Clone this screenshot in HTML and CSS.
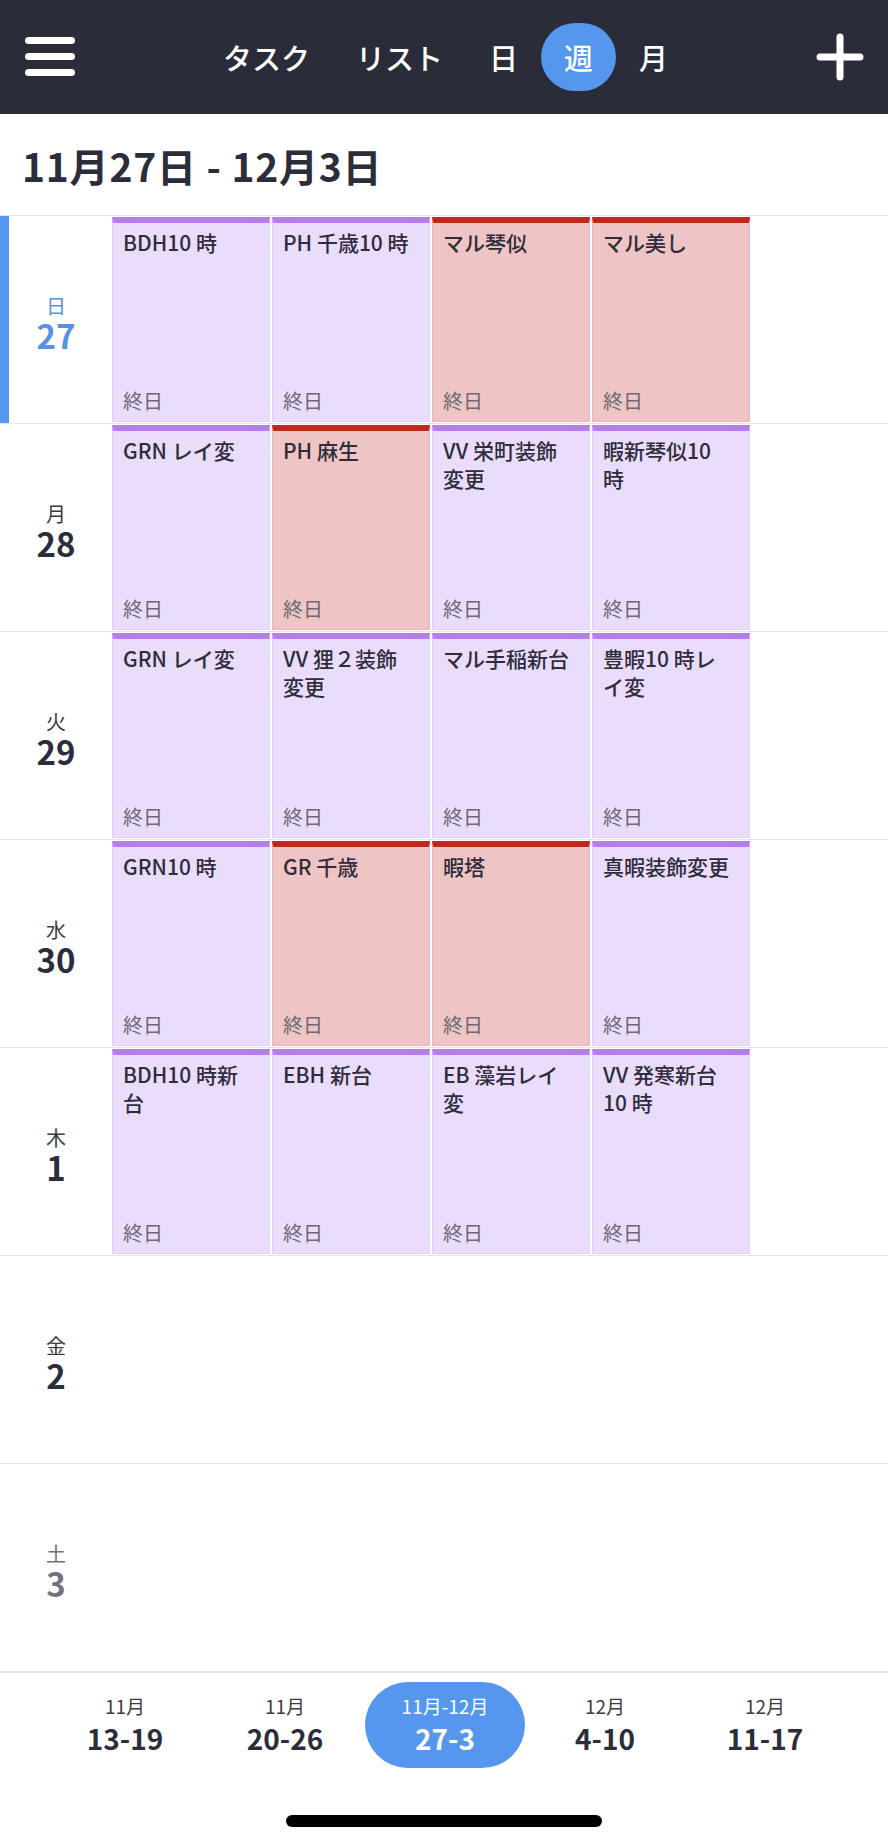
FILE: index.html
```html
<!DOCTYPE html>
<html lang="ja">
  <head>
    <meta charset="UTF-8" />
    <meta name="viewport" content="width=device-width, initial-scale=1.0" />
    <title>週表示</title>
    <link rel="stylesheet" href="styles.css">
  </head>
  <body>
    <div class="app">
      <header class="topbar">
        <button class="menu-button" aria-label="メニュー">
          <span></span><span></span><span></span>
        </button>
        <nav class="view-tabs">
          <a class="view-tab">タスク</a>
          <a class="view-tab">リスト</a>
          <a class="view-tab">日</a>
          <a class="view-tab active">週</a>
          <a class="view-tab">月</a>
        </nav>
        <button class="add-button" aria-label="追加">
          <svg width="48" height="48" viewBox="0 0 48 48">
            <path d="M24 4 V44 M4 24 H44" stroke="#fff" stroke-width="7" stroke-linecap="round" fill="none" />
          </svg>
        </button>
      </header>

      <section class="week-title">
        <h1>11月27日 - 12月3日</h1>
      </section>

      <main class="week">
        <div class="day-row">
          <div class="day-label today">
            <span class="weekday">日</span>
            <span class="date">27</span>
          </div>
          <div class="events">
            <div class="event purple"><div class="event-title">BDH10 時</div><div class="event-time">終日</div></div>
            <div class="event purple"><div class="event-title">PH 千歳10 時</div><div class="event-time">終日</div></div>
            <div class="event red"><div class="event-title">マル琴似</div><div class="event-time">終日</div></div>
            <div class="event red"><div class="event-title">マル美し</div><div class="event-time">終日</div></div>
          </div>
        </div>

        <div class="day-row">
          <div class="day-label">
            <span class="weekday">月</span>
            <span class="date">28</span>
          </div>
          <div class="events">
            <div class="event purple"><div class="event-title">GRN レイ変</div><div class="event-time">終日</div></div>
            <div class="event red"><div class="event-title">PH 麻生</div><div class="event-time">終日</div></div>
            <div class="event purple"><div class="event-title">VV 栄町装飾<br>変更</div><div class="event-time">終日</div></div>
            <div class="event purple"><div class="event-title">暇新琴似10<br>時</div><div class="event-time">終日</div></div>
          </div>
        </div>

        <div class="day-row">
          <div class="day-label">
            <span class="weekday">火</span>
            <span class="date">29</span>
          </div>
          <div class="events">
            <div class="event purple"><div class="event-title">GRN レイ変</div><div class="event-time">終日</div></div>
            <div class="event purple"><div class="event-title">VV 狸２装飾<br>変更</div><div class="event-time">終日</div></div>
            <div class="event purple"><div class="event-title">マル手稲新台</div><div class="event-time">終日</div></div>
            <div class="event purple"><div class="event-title">豊暇10 時レ<br>イ変</div><div class="event-time">終日</div></div>
          </div>
        </div>

        <div class="day-row">
          <div class="day-label">
            <span class="weekday">水</span>
            <span class="date">30</span>
          </div>
          <div class="events">
            <div class="event purple"><div class="event-title">GRN10 時</div><div class="event-time">終日</div></div>
            <div class="event red"><div class="event-title">GR 千歳</div><div class="event-time">終日</div></div>
            <div class="event red"><div class="event-title">暇塔</div><div class="event-time">終日</div></div>
            <div class="event purple"><div class="event-title">真暇装飾変更</div><div class="event-time">終日</div></div>
          </div>
        </div>

        <div class="day-row">
          <div class="day-label">
            <span class="weekday">木</span>
            <span class="date">1</span>
          </div>
          <div class="events">
            <div class="event purple"><div class="event-title">BDH10 時新<br>台</div><div class="event-time">終日</div></div>
            <div class="event purple"><div class="event-title">EBH 新台</div><div class="event-time">終日</div></div>
            <div class="event purple"><div class="event-title">EB 藻岩レイ<br>変</div><div class="event-time">終日</div></div>
            <div class="event purple"><div class="event-title">VV 発寒新台<br>10 時</div><div class="event-time">終日</div></div>
          </div>
        </div>

        <div class="day-row">
          <div class="day-label">
            <span class="weekday">金</span>
            <span class="date">2</span>
          </div>
          <div class="events"></div>
        </div>

        <div class="day-row">
          <div class="day-label saturday">
            <span class="weekday">土</span>
            <span class="date">3</span>
          </div>
          <div class="events"></div>
        </div>
      </main>

      <footer class="week-picker">
        <div class="week-list">
          <div class="week-item"><span class="week-month">11月</span><span class="week-range">13-19</span></div>
          <div class="week-item"><span class="week-month">11月</span><span class="week-range">20-26</span></div>
          <div class="week-item active"><span class="week-month">11月-12月</span><span class="week-range">27-3</span></div>
          <div class="week-item"><span class="week-month">12月</span><span class="week-range">4-10</span></div>
          <div class="week-item"><span class="week-month">12月</span><span class="week-range">11-17</span></div>
          <div class="week-item"><span class="week-month">12月</span><span class="week-range">18-24</span></div>
        </div>
        <div class="home-indicator"></div>
      </footer>
    </div>
  </body>
</html>
```

FILE: styles.css
```css
body {
  margin: 0;
  padding: 0;
  background-color: #fff;
  font-family: "Noto Sans CJK JP", "Noto Sans", sans-serif;
  color: #2b2d3a;
  overflow: hidden;
}

.app {
  width: 888px;
  height: 1845px;
  display: flex;
  flex-direction: column;
}

/* top bar */

.topbar {
  height: 114px;
  flex-shrink: 0;
  background-color: #2a2c39;
  display: flex;
  align-items: center;
  justify-content: space-between;
  padding: 0 25px;
  box-sizing: border-box;
}

.menu-button,
.add-button {
  background: none;
  border: none;
  padding: 0;
  cursor: pointer;
}

.menu-button {
  width: 50px;
  display: flex;
  flex-direction: column;
  gap: 9px;
  margin-top: -2px;
}

.menu-button span {
  display: block;
  height: 7px;
  border-radius: 4px;
  background-color: #fff;
}

.add-button {
  width: 48px;
  height: 48px;
  margin-right: -1px;
}

.add-button svg {
  display: block;
}

.view-tabs {
  display: flex;
  align-items: center;
}

.view-tab {
  height: 68px;
  padding: 0 23px;
  display: flex;
  align-items: center;
  color: #fff;
  font-size: 29px;
  font-weight: 500;
  border-radius: 34px;
  cursor: pointer;
}

.view-tab.active {
  background-color: #5596ee;
}

/* week heading */

.week-title {
  height: 101px;
  flex-shrink: 0;
  display: flex;
  align-items: center;
  padding-left: 22px;
  box-sizing: border-box;
}

.week-title h1 {
  margin: 0;
  font-size: 39px;
  font-weight: 700;
  letter-spacing: 0.8px;
  color: #2b2d3a;
}

/* week rows */

.week {
  border-top: 1px solid #e6e6e8;
  flex-shrink: 0;
}

.day-row {
  height: 207px;
  display: flex;
  border-bottom: 1px solid #e6e6e8;
}

.day-label {
  width: 112px;
  flex-shrink: 0;
  display: flex;
  flex-direction: column;
  align-items: center;
  justify-content: center;
  padding-top: 8px;
  box-sizing: border-box;
}

.day-label .weekday {
  font-size: 20px;
  line-height: 22px;
  color: #3a3b45;
}

.day-label .date {
  font-size: 33px;
  font-weight: 700;
  line-height: 36px;
  color: #2b2d3a;
}

.day-label.today {
  box-shadow: inset 9px 0 0 #5596ee;
}

.day-label.today .weekday,
.day-label.today .date {
  color: #5592e4;
}

.day-label.saturday .weekday,
.day-label.saturday .date {
  color: #70737d;
}

.events {
  display: flex;
  gap: 2px;
  padding: 1px 0 1px;
}

.event {
  width: 158px;
  display: flex;
  flex-direction: column;
  border-top: 6px solid;
  border-left: 1px solid rgba(90, 60, 110, 0.07);
  border-right: 1px solid rgba(90, 60, 110, 0.07);
  border-bottom: 1px solid rgba(90, 60, 110, 0.07);
  padding: 5px 6px 7px 10px;
  box-sizing: border-box;
}

.event.purple {
  background-color: #eadcfb;
  border-top-color: #b57ee8;
}

.event.red {
  background-color: #eec4c5;
  border-top-color: #c0291f;
}

.event-title {
  font-size: 21px;
  font-weight: 500;
  line-height: 28px;
  color: #2f2c3b;
}

.event-time {
  margin-top: auto;
  font-size: 20px;
  line-height: 27px;
  color: #6c6971;
}

/* week picker */

.week-picker {
  flex: 1;
  border-top: 1px solid #e6e6e8;
  display: flex;
  flex-direction: column;
  align-items: center;
  overflow: hidden;
}

.week-list {
  width: 100%;
  display: flex;
  padding: 9px 0 0 45px;
  box-sizing: border-box;
}

.week-item {
  width: 160px;
  height: 86px;
  flex-shrink: 0;
  display: flex;
  flex-direction: column;
  align-items: center;
  justify-content: center;
  border-radius: 43px;
}

.week-item.active {
  background-color: #5596ee;
  color: #fff;
}

.week-month {
  font-size: 19px;
  line-height: 26px;
  color: #3a3b45;
}

.week-range {
  font-size: 28px;
  font-weight: 700;
  line-height: 38px;
}

.week-item.active .week-month,
.week-item.active .week-range {
  color: #fff;
}

.home-indicator {
  width: 316px;
  height: 12px;
  border-radius: 6px;
  background-color: #000;
  margin-top: 47px;
}
```
